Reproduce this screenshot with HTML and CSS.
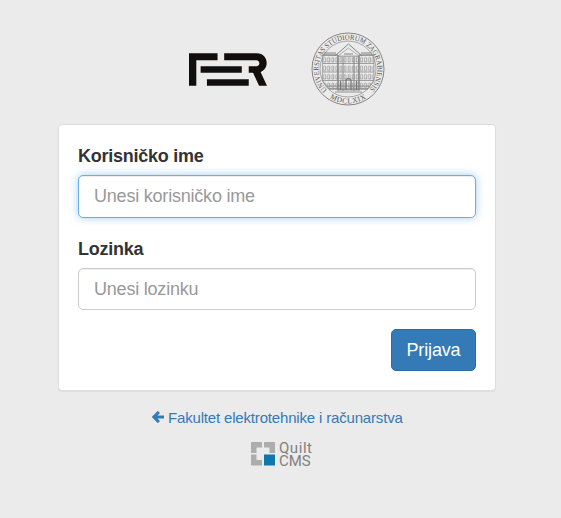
FILE: index.html
```html
<!DOCTYPE html>
<html lang="hr">
<head>
<meta charset="utf-8">
<title>Prijava</title>
<link rel="stylesheet" href="styles.css">
</head>
<body>
<main class="login">
  <header class="logos">
    <svg class="fer" viewBox="0 0 235 98" fill="#100f0d" aria-label="FER">
      <path d="M0 0H86V21H22V98H0Z"/>
      <path d="M35 39H159V59H35Z"/>
      <path d="M54 78H180V98H54Z"/>
      <path d="M106 0H204C224 0 234 14 234 29C234 43 227 52 216 57L235 98H211L193 59H180V39H203C215 39 215 21 203 21H106Z"/>
    </svg>
    <svg class="seal" viewBox="-37 -37 74 74" fill="none" stroke="#858585" aria-label="Sveučilište u Zagrebu">
      <defs>
        <path id="arc" d="M-20.800 20.800A29.400 29.400 0 1 1 20.800 20.800"/>
        <path id="base" d="M-25 23.500A34.300 34.300 0 0 0 25 23.500"/>
        <pattern id="windows" width="4.100" height="8.500" patternUnits="userSpaceOnUse" x="-25.500" y="-13.500">
          <path d="M1 6.500V2.500Q2 1.300 3.100 2.500V6.500ZM0 8H4.100" stroke="#858585" stroke-width=".7"/>
        </pattern>
      </defs>
      <circle r="36" stroke-width="1"/>
      <circle r="28" stroke-width=".7"/>
      <g class="seal-text" stroke="none" fill="#555">
        <text><textPath href="#arc" textLength="137" lengthAdjust="spacingAndGlyphs">UNIVERSITAS STUDIORUM ZAGRABIENSIS</textPath></text>
        <text><textPath href="#base" startOffset="50%" text-anchor="middle" textLength="38">MDCLXIX</textPath></text>
      </g>
      <path d="M-25.500-14H-10V20H-19L-25.500 12ZM11-14H26V12L20 20H11Z" fill="url(#windows)" stroke-width=".6"/>
      <path d="M-10-13H11V21H-10Z" fill="url(#windows)" stroke-width=".8"/>
      <path d="M-10-13L.5-21L11-13Z" fill="#ebebeb" stroke-width=".6"/>
      <path d="M-13-13L.5-25L14-13M-25.500-14H-10M11-14H26M-24-16H-12M13-16H24M-4-15H5" stroke-width="1"/>
      <path d="M-10-13V22M-5-12V22M6-12V22M11-13V22M-22 17H22M-19 20H20M-13 23H14" stroke-width=".9"/>
      <path d="M-2 21V11Q.5 8 3 11V21M-7.500 21V12M8.500 21V12" stroke="#777" stroke-width="1.300"/>
    </svg>
  </header>

  <form class="card">
    <label class="label" for="user">Korisničko ime</label>
    <input class="field field-active" id="user" type="text" placeholder="Unesi korisničko ime">
    <label class="label" for="pass">Lozinka</label>
    <input class="field" id="pass" type="password" placeholder="Unesi lozinku">
    <button class="submit" type="button">Prijava</button>
  </form>

  <a class="back" href="#">
    <svg class="arrow" viewBox="0 0 12 12" fill="none" stroke="#337ab7" stroke-width="3"><path d="M6.900.9L1.900 6L6.900 11.100M2.200 6H12"/></svg>
    <span>Fakultet elektrotehnike i računarstva</span>
  </a>

  <footer class="quilt">
    <svg class="quilt-mark" viewBox="0 0 24 24">
      <path fill="#adadad" d="M0 0H11V5.500H5.500V11H0ZM13 0H24V11H18.500V5.500H13ZM0 12.500H5.500V18H11V23.500H0Z"/>
      <path fill="#0f77ab" d="M13 12.500H24V23.500H13Z"/>
    </svg>
    <div class="quilt-name">
      <span class="quilt-top">Quilt</span>
      <span>CMS</span>
    </div>
  </footer>
</main>
</body>
</html>
```
FILE: styles.css
```css
* { box-sizing: border-box; }
body {
  margin: 0;
  min-height: 518px;
  background: #ebebeb;
  color: #333;
  font-family: "Liberation Sans", Arial, sans-serif;
}
.login {
  display: flex;
  flex-direction: column;
  width: 438px;
  margin-left: 58px;
  padding-top: 32px;
}
.logos {
  display: flex;
  height: 74px;
  margin-bottom: 18px;
  padding-left: 131px;
}
.fer { width: 78px; height: 33px; margin-top: 21px; }
.seal { width: 74px; height: 74px; margin-left: 44px; }
.seal-text { font: 7.4px "Liberation Serif", serif; }
.card {
  display: flex;
  flex-direction: column;
  height: 267px;
  padding: 19px;
  background: #fff;
  border: 1px solid #ddd;
  border-radius: 4px;
  box-shadow: 0 1px 1px rgba(0, 0, 0, .05);
}
.label {
  height: 26px;
  margin-bottom: 5px;
  font-size: 18px;
  font-weight: bold;
  letter-spacing: -.25px;
  line-height: 25px;
}
.field {
  flex: none;
  width: 100%;
  height: 42px;
  margin: 0 0 19px;
  padding: 0 15px;
  border: 1px solid #ccc;
  border-radius: 5px;
  outline: 0;
  background: #fff;
  box-shadow: inset 0 1px 1px rgba(0, 0, 0, .075);
  font: 18px "Liberation Sans", Arial, sans-serif;
  letter-spacing: -.21px;
}
.field::placeholder { color: #999; opacity: 1; }
.field-active {
  height: 43px;
  border-color: #66afe9;
  box-shadow: inset 0 1px 1px rgba(0, 0, 0, .075), 0 0 8px rgba(102, 175, 233, .6);
}
.submit {
  align-self: flex-end;
  width: 85px;
  height: 42px;
  padding: 0;
  border: 1px solid #2e6da4;
  border-radius: 5px;
  background: #337ab7;
  color: #fff;
  font: 18px "Liberation Sans", Arial, sans-serif;
  letter-spacing: -.15px;
}
.back {
  display: flex;
  align-items: center;
  gap: 4px;
  height: 20px;
  margin: 16px 0 0 94px;
  color: #337ab7;
  font-size: 15px;
  letter-spacing: -.17px;
  text-decoration: none;
  white-space: nowrap;
}
.arrow { width: 12px; height: 12px; }
.quilt {
  display: flex;
  gap: 4px;
  margin: 15px 0 0 193px;
}
.quilt-mark { width: 24px; height: 24px; }
.quilt-name {
  display: flex;
  flex-direction: column;
  color: #808080;
  font: 15px/12.5px Roboto, sans-serif;
}
.quilt-top { letter-spacing: .55px; }
```
